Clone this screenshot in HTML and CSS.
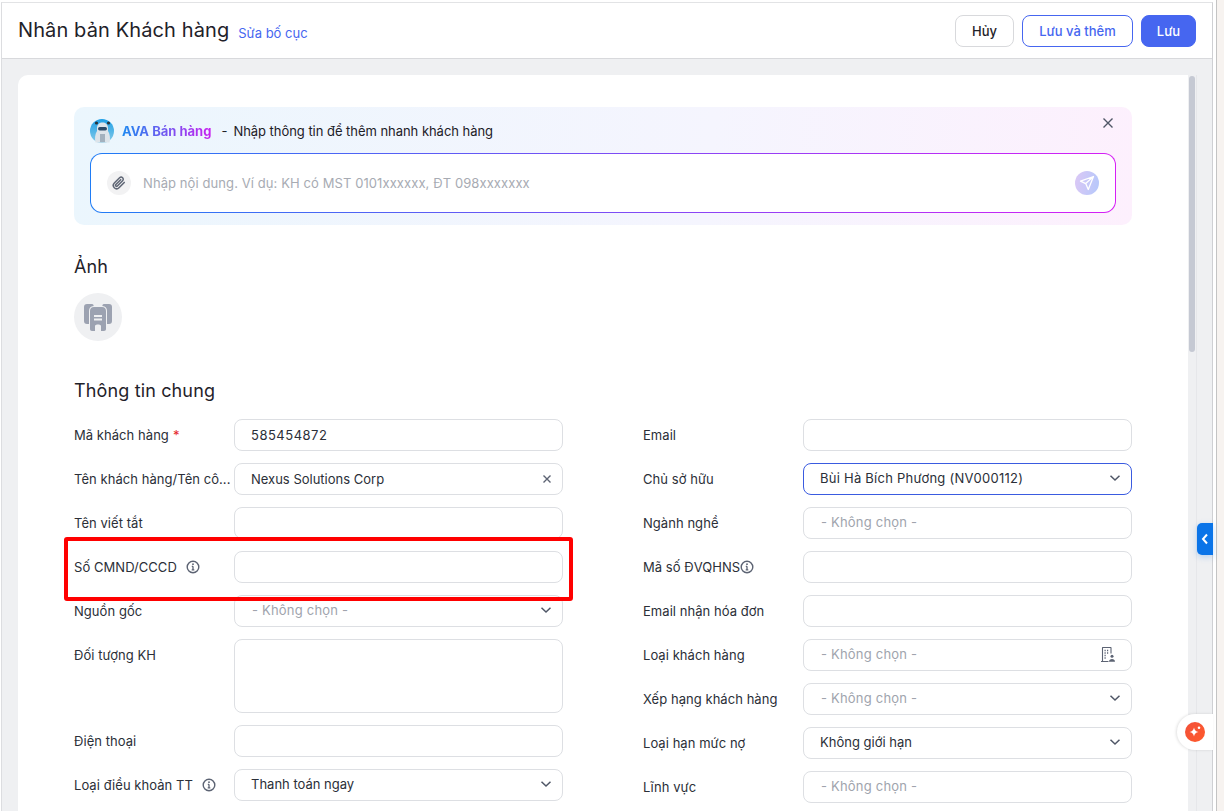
FILE: index.html
```html
<!DOCTYPE html>
<html lang="vi">
<head>
  <meta charset="UTF-8" />
  <meta name="viewport" content="width=device-width, initial-scale=1.0" />
  <title>Nhân bản Khách hàng</title>
  <link rel="stylesheet" href="styles.css">
</head>
<body>
  <div class="app">
    <header class="top-bar">
      <h1>Nhân bản Khách hàng</h1>
      <a class="edit-link">Sửa bố cục</a>
      <div class="top-actions">
        <button class="btn btn-cancel">Hủy</button>
        <button class="btn btn-outline">Lưu và thêm</button>
        <button class="btn btn-primary">Lưu</button>
      </div>
    </header>

    <div class="content">
      <main class="card">
        <section class="ava">
          <div class="ava-head">
            <svg class="ava-avatar" width="24" height="24" viewBox="0 0 24 24">
              <defs><linearGradient id="avaBg" x1="0" y1="0" x2="0" y2="1"><stop offset="0" stop-color="#1f9fe6"/><stop offset="1" stop-color="#86cbe8"/></linearGradient></defs>
              <circle cx="12" cy="12" r="12" fill="url(#avaBg)"/>
              <circle cx="6.500" cy="4" r="1.600" fill="#26323c"/>
              <circle cx="18.500" cy="4" r="1.600" fill="#26323c"/>
              <path d="M7 9c0-3.500 2.500-5.500 5.500-5.500S18 5.500 18 9v3c2 3 2.500 8 1.500 11.500h-14C4.500 20 5 15 7 12z" fill="#dde4ea"/>
              <rect x="8" y="8" width="9" height="3.500" rx="1.700" fill="#2c4a68"/>
              <path d="M10 15h5v8h-5z" fill="#a3b1be"/>
            </svg>
            <strong class="ava-name">AVA Bán hàng</strong>
            <span class="ava-dash">-</span>
            <span class="ava-desc">Nhập thông tin để thêm nhanh khách hàng</span>
            <svg class="ava-close" width="12" height="12" viewBox="0 0 12 12"><path d="M1.500 1.500l9 9M10.500 1.500l-9 9" stroke="#4f5666" stroke-width="1.400" fill="none"/></svg>
          </div>
          <div class="ava-input">
            <span class="clip">
              <svg width="14" height="14" viewBox="0 0 24 24" fill="none" stroke="#5f6675" stroke-width="2.600" stroke-linecap="round" stroke-linejoin="round"><path d="M21 11l-9 9a5.500 5.500 0 0 1-8-8l9-9a3.600 3.600 0 0 1 5.200 5.200l-9 9a1.800 1.800 0 0 1-2.600-2.600l8.300-8.300"/></svg>
            </span>
            <span class="ava-placeholder">Nhập nội dung. Ví dụ: KH có MST 0101xxxxxx, ĐT 098xxxxxxx</span>
            <span class="send">
              <svg width="16" height="16" viewBox="0 0 16 16" fill="none" stroke="#fff" stroke-width="1.300" stroke-linejoin="round"><path d="M14.500 1.500L1.500 6.200l5.200 2.400 2.600 5.900zM14.500 1.500L6.700 8.600"/></svg>
            </span>
          </div>
        </section>

        <h2 class="section-title photo-title">Ảnh</h2>
        <div class="photo">
          <svg width="28" height="27" viewBox="0 0 28 27">
            <path d="M3 0h5c1.200 0 2 1 1.500 2C6.500 2.500 5 4 5 7v13H3c-2 0-3-1-3-3V3c0-2 1-3 3-3zM25 0h-5c-1.200 0-2 1-1.500 2 3 .5 4.500 2 4.500 5v13h2c2 0 3-1 3-3V3c0-2-1-3-3-3z" fill="#9ca2b1"/>
            <path d="M10 3h8c2.500 0 4 1.500 4 4v18c0 1.200-.7 2-2 2h-3v-5c0-2-6-2-6 0v5H8c-1.300 0-2-.8-2-2V7c0-2.500 1.500-4 4-4z" fill="#9ca2b1"/>
            <path d="M10 12h8M10 15.500h8" stroke="#eff0f2" stroke-width="1.800"/>
          </svg>
        </div>

        <h2 class="section-title info-title">Thông tin chung</h2>
        <div class="form-grid">
          <div class="form-col">
            <div class="field"><label>Mã khách hàng <i class="req">*</i></label><div class="input typed num">585454872</div></div>
            <div class="field"><label>Tên khách hàng/Tên cô...</label><div class="input typed">Nexus Solutions Corp
              <svg class="input-icon" width="10" height="10" viewBox="0 0 10 10"><path d="M1.500 1.500l7 7M8.500 1.500l-7 7" stroke="#5c6373" stroke-width="1.400" fill="none"/></svg></div></div>
            <div class="field"><label>Tên viết tắt</label><div class="input"></div></div>
            <div class="field"><label>Số CMND/CCCD <svg class="info info-gap" viewBox="0 0 14 14"><use href="#i-info"/></svg></label><div class="input"></div></div>
            <div class="field"><label>Nguồn gốc</label><div class="input muted">- Không chọn -<svg class="input-icon" width="12" height="8" viewBox="0 0 12 8"><use href="#i-chev"/></svg></div></div>
            <div class="field"><label>Đối tượng KH</label><div class="input tall"></div></div>
            <div class="field"><label>Điện thoại</label><div class="input"></div></div>
            <div class="field"><label>Loại điều khoản TT <svg class="info info-gap" viewBox="0 0 14 14"><use href="#i-info"/></svg></label><div class="input">Thanh toán ngay<svg class="input-icon" width="12" height="8" viewBox="0 0 12 8"><use href="#i-chev"/></svg></div></div>
          </div>
          <div class="form-col">
            <div class="field"><label>Email</label><div class="input"></div></div>
            <div class="field"><label>Chủ sở hữu</label><div class="input active">Bùi Hà Bích Phương (NV000112)<svg class="input-icon" width="12" height="8" viewBox="0 0 12 8"><use href="#i-chev"/></svg></div></div>
            <div class="field"><label>Ngành nghề</label><div class="input muted">- Không chọn -</div></div>
            <div class="field"><label>Mã số ĐVQHNS<svg class="info" viewBox="0 0 14 14"><use href="#i-info"/></svg></label><div class="input"></div></div>
            <div class="field"><label>Email nhận hóa đơn</label><div class="input"></div></div>
            <div class="field"><label>Loại khách hàng</label><div class="input muted">- Không chọn -
              <svg class="input-icon building" width="15" height="15" viewBox="0 0 15 15" fill="none" stroke="#5c6373" stroke-width="1.100"><path d="M0 14.500h7.500M1.500 14.500V1c0-.3.200-.5.500-.5h7.500c.3 0 .5.200.5.500v5.500"/><path d="M3.500 3.500h1.200M6 3.500h1.200M3.500 6h1.200M6 6h1.200M3.500 8.500h1.200M3.500 11h1.200" stroke-width="1.300"/><circle cx="11" cy="9.300" r="1.500" fill="#5c6373" stroke="none"/><path d="M8 14.800c0-3.600 6-3.600 6 0z" fill="#5c6373" stroke="none"/></svg></div></div>
            <div class="field"><label>Xếp hạng khách hàng</label><div class="input muted">- Không chọn -<svg class="input-icon" width="12" height="8" viewBox="0 0 12 8"><use href="#i-chev"/></svg></div></div>
            <div class="field"><label>Loại hạn mức nợ</label><div class="input">Không giới hạn<svg class="input-icon" width="12" height="8" viewBox="0 0 12 8"><use href="#i-chev"/></svg></div></div>
            <div class="field"><label>Lĩnh vực</label><div class="input muted">- Không chọn -</div></div>
          </div>
        </div>
      </main>
      <div class="scroll-track"><div class="scroll-thumb"></div></div>
    </div>
  </div>
  <div class="side-strip"></div>

  <div class="highlight"></div>
  <div class="tab-collapse">
    <svg width="8" height="12" viewBox="0 0 8 12"><path d="M6 1.500L2 6l4 4.500" stroke="#fff" stroke-width="2" fill="none"/></svg>
  </div>
  <div class="tab-ai">
    <span class="ai-dot">
      <svg width="14" height="14" viewBox="0 0 14 14" fill="#fff"><path d="M6 2.500c.5 2.800 1.700 4 4.500 4.500-2.800.5-4 1.700-4.500 4.500-.5-2.800-1.700-4-4.500-4.500 2.800-.5 4-1.700 4.500-4.500z"/><circle cx="11" cy="2.800" r="1.300"/></svg>
    </span>
  </div>

  <svg width="0" height="0" class="defs">
    <symbol id="i-info" viewBox="0 0 14 14">
      <circle cx="7" cy="7" r="5.800" fill="none" stroke="#5c6373" stroke-width="1.400"/>
      <path d="M7 6.200v3.500M5.800 6.300H7M5.700 9.800h2.600" stroke="#5c6373" stroke-width="1.300" fill="none"/>
      <circle cx="7" cy="4.200" r=".9" fill="#5c6373"/>
    </symbol>
    <symbol id="i-chev" viewBox="0 0 12 8">
      <path d="M1.500 1.800L6 6l4.500-4.200" stroke="#4f5666" stroke-width="1.500" fill="none"/>
    </symbol>
  </svg>
</body>
</html>
```

FILE: styles.css
```css
:root {
  --accent: #4666f0;
  --line: #dddfe3;
  --text: #1f2229;
}

* {
  box-sizing: border-box;
}

html, body {
  margin: 0;
  padding: 0;
  height: 811px;
  overflow: hidden;
  background: #fff;
  font-family: Inter, 'Noto Sans', sans-serif;
  font-size: 13px;
  color: var(--text);
}

body {
  display: flex;
}

.app {
  width: 1212px;
  flex-shrink: 0;
  height: 809px;
  margin: 2px 0 0 1px;
  border-top: 1px solid #e2e3e5;
  border-left: 1px solid #dcdde0;
  border-right: 1px solid #cfd0d3;
  display: flex;
  flex-direction: column;
  overflow: hidden;
}

.side-strip {
  flex: 1;
  margin-left: 3px;
  background: #f7f3f0;
  border-left: 1px solid #c4c4c4;
}

.defs {
  position: absolute;
}

/* header */
.top-bar {
  height: 56px;
  flex-shrink: 0;
  display: flex;
  align-items: center;
  padding: 0 16px;
  background: #fff;
  border-bottom: 1px solid #d8d9dc;
}

.top-bar h1 {
  margin: 0 0 1px;
  font-size: 20px;
  font-weight: 400;
  line-height: 54px;
  letter-spacing: .11px;
}

.edit-link {
  margin: 5px 0 0 9px;
  font-size: 13px;
  color: var(--accent);
}

.top-actions {
  margin-left: auto;
  display: flex;
  gap: 8px;
}

.btn {
  height: 32px;
  border-radius: 8px;
  padding: 0 16px;
  font-family: inherit;
  font-size: 13px;
  font-weight: 500;
  background: #fff;
}

.btn-cancel {
  width: 59px;
  padding: 0;
  border: 1px solid #d8d9dc;
  color: var(--text);
}

.btn-outline {
  width: 111px;
  padding: 0;
  border: 1px solid var(--accent);
  color: var(--accent);
}

.btn-primary {
  width: 55px;
  padding: 0;
  border: 1px solid var(--accent);
  background: var(--accent);
  color: #fff;
}

/* content */
.content {
  flex: 1;
  display: flex;
  align-items: flex-start;
  padding: 16px 0 0 16px;
  background: #eff0f2;
  min-height: 0;
}

.card {
  width: 1170px;
  height: 800px;
  flex-shrink: 0;
  padding: 32px 56px 0;
  background: #fff;
  border-radius: 10px 0 0 0;
}

.scroll-track {
  width: 9px;
  padding-left: 1px;
  border-right: 1px solid #e6e7ea;
  height: 800px;
}

.scroll-thumb {
  width: 6px;
  height: 276px;
  margin-top: 1px;
  border-radius: 3px;
  background: #c5c9d3;
}

/* ava */
.ava {
  height: 118px;
  padding: 12px 16px 0;
  border-radius: 10px;
  background: linear-gradient(95deg, #ebf6fd 0%, #f5f5fe 60%, #fdf0fd 100%);
}

.ava-head {
  height: 24px;
  display: flex;
  align-items: center;
}

.ava-avatar {
  flex-shrink: 0;
}

.ava-name {
  margin-left: 8px;
  font-weight: 700;
  font-size: 13px;
  background: linear-gradient(90deg, #1f8af0, #c822f0);
  -webkit-background-clip: text;
  background-clip: text;
  color: transparent;
}

.ava-dash {
  margin-left: 10px;
}

.ava-desc {
  margin-left: 6px;
  color: #1d2027;
  letter-spacing: -.04px;
}

.ava-close {
  margin-left: auto;
  margin-top: -16px;
  margin-right: 2px;
}

.ava-input {
  height: 60px;
  margin-top: 10px;
  padding: 0 16px;
  display: flex;
  align-items: center;
  border: 1px solid transparent;
  border-radius: 12px;
  background: linear-gradient(#fff, #fff) padding-box, linear-gradient(90deg, #1f7cf5, #d61ff5) border-box;
}

.clip {
  width: 24px;
  height: 24px;
  border-radius: 50%;
  background: #f2f2f3;
  display: flex;
  align-items: center;
  justify-content: center;
}

.ava-placeholder {
  margin-left: 12px;
  color: #a7abb3;
  letter-spacing: .09px;
}

.send {
  margin-left: auto;
  width: 24px;
  height: 24px;
  border-radius: 50%;
  background: linear-gradient(100deg, #dcc8f5, #b4c8fb);
  display: flex;
  align-items: center;
  justify-content: center;
}

/* sections */
.section-title {
  margin: 0;
  font-size: 18px;
  font-weight: 400;
  line-height: 24px;
  letter-spacing: .14px;
}

.photo-title {
  margin-top: 30px;
}

.photo {
  width: 48px;
  height: 48px;
  margin-top: 14px;
  border-radius: 50%;
  background: #eff0f2;
  display: flex;
  align-items: center;
  justify-content: center;
}

.info-title {
  margin-top: 38px;
}

.form-grid {
  margin-top: 16px;
  display: grid;
  grid-template-columns: 489px 489px;
  column-gap: 80px;
}

.form-col {
  display: flex;
  flex-direction: column;
  gap: 12px;
}

.field {
  display: flex;
  align-items: flex-start;
}

.field label {
  width: 160px;
  flex-shrink: 0;
  display: flex;
  align-items: center;
  height: 32px;
  white-space: nowrap;
  color: #2b2f38;
  letter-spacing: .05px;
}

.req {
  color: #e5252a;
  font-style: normal;
  margin-left: 4px;
}

.info {
  width: 14px;
  height: 14px;
}

.info-gap {
  margin-left: 9px;
}

.input {
  flex: 1;
  height: 32px;
  padding: 0 10px 2px 16px;
  display: flex;
  align-items: center;
  justify-content: flex-start;
  border: 1px solid var(--line);
  border-radius: 8px;
  background: #fff;
  color: #2b2f38;
  white-space: nowrap;
}

.input.typed {
  padding-bottom: 0;
}

.input.num {
  letter-spacing: .5px;
}

.input.muted {
  padding-left: 17px;
  color: #a0a4ad;
  letter-spacing: .2px;
}

.input.active {
  border-color: #3a5be0;
  letter-spacing: .25px;
}

.input.tall {
  height: 74px;
}

.input-icon {
  margin-left: auto;
  flex-shrink: 0;
}

.building {
  margin-right: 5px;
}

/* floating */
.highlight {
  position: absolute;
  left: 64px;
  top: 537px;
  width: 509px;
  height: 64px;
  border: 4px solid #ff0000;
  border-radius: 3px;
  pointer-events: none;
}

.tab-collapse {
  position: absolute;
  left: 1197px;
  top: 523px;
  width: 16px;
  height: 32px;
  border-radius: 5px 0 0 5px;
  background: #0a74e8;
  box-shadow: 0 2px 6px rgba(10, 116, 232, .25);
  display: flex;
  align-items: center;
  justify-content: center;
}

.tab-ai {
  position: absolute;
  left: 1177px;
  top: 714px;
  width: 36px;
  height: 36px;
  border-radius: 18px 0 0 18px;
  background: #fff;
  box-shadow: -1px 0 3px rgba(0, 0, 0, .12);
  display: flex;
  align-items: center;
  padding-left: 8px;
}

.ai-dot {
  width: 20px;
  height: 20px;
  border-radius: 50%;
  background: linear-gradient(135deg, #f2503a, #ff5a2a);
  display: flex;
  align-items: center;
  justify-content: center;
}
```
